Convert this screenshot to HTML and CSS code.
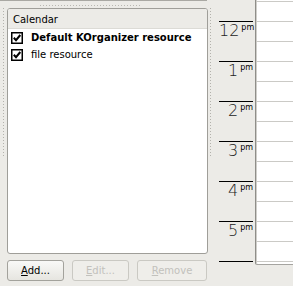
FILE: index.html
```html
<!DOCTYPE html>
<html lang="en">
<head>
    <meta charset="UTF-8">
    <title>Calendar resources</title>
    <link rel="stylesheet" href="styles.css">
</head>
<body>
    <div class="window">
        <div class="side">
            <div class="top-frame">
                <div class="hgrip"></div>
            </div>
            <div class="side-row">
                <div class="vgrip vgrip-left"></div>
                <div class="side-main">
                    <div class="cal-list">
                        <div class="cal-head">Calendar</div>
                        <div class="cal-item active">
                            <svg class="check" width="12" height="12" viewBox="0 0 12 12"><rect x="0.75" y="0.75" width="10.5" height="10.5" fill="#fff" stroke="#000" stroke-width="1.5"/><path d="M2.8 5.8 L5 8.2 L9.3 3" fill="none" stroke="#000" stroke-width="2"/></svg>
                            Default KOrganizer resource
                        </div>
                        <div class="cal-item">
                            <svg class="check" width="12" height="12" viewBox="0 0 12 12"><rect x="0.75" y="0.75" width="10.5" height="10.5" fill="#fff" stroke="#000" stroke-width="1.5"/><path d="M2.8 5.8 L5 8.2 L9.3 3" fill="none" stroke="#000" stroke-width="2"/></svg>
                            file resource
                        </div>
                    </div>
                    <div class="buttons">
                        <button class="btn btn-add"><u>A</u>dd...</button>
                        <button class="btn btn-edit" disabled><u>E</u>dit...</button>
                        <button class="btn btn-remove" disabled><u>R</u>emove</button>
                    </div>
                </div>
                <div class="vgrip vgrip-right"></div>
            </div>
        </div>
        <div class="timebar">
            <div class="hour"><span class="num">12</span><span class="ampm">pm</span></div>
            <div class="hour"><span class="num">1</span><span class="ampm">pm</span></div>
            <div class="hour"><span class="num">2</span><span class="ampm">pm</span></div>
            <div class="hour"><span class="num">3</span><span class="ampm">pm</span></div>
            <div class="hour"><span class="num">4</span><span class="ampm">pm</span></div>
            <div class="hour"><span class="num">5</span><span class="ampm">pm</span></div>
            <div class="hour"></div>
        </div>
        <div class="agenda">
            <div class="slot"></div><div class="slot"></div><div class="slot"></div>
            <div class="slot"></div><div class="slot"></div><div class="slot"></div>
            <div class="slot"></div><div class="slot"></div><div class="slot"></div>
            <div class="slot"></div><div class="slot"></div><div class="slot"></div>
            <div class="slot"></div><div class="slot"></div>
        </div>
    </div>
</body>
</html>
```

FILE: styles.css
```css
body {
    margin: 0;
    padding: 0;
    background: #ecebe7;
    font-family: 'DejaVu Sans', sans-serif;
    font-size: 10px;
    color: #000;
}
.window {
    display: flex;
    align-items: flex-start;
    width: 293px;
    height: 286px;
    overflow: hidden;
}
.side {
    width: 212px;
    flex-shrink: 0;
    display: flex;
    flex-direction: column;
}
.top-frame {
    width: 207px;
    height: 7px;
    border-top: 1px solid #a9a8a3;
    border-bottom-right-radius: 3px;
}
.hgrip {
    margin: 4px 0 0 40px;
    width: 100px;
    height: 1px;
    background: repeating-linear-gradient(to right, #b9b8b2 0 1px, transparent 1px 3px);
}
.side-row {
    display: flex;
}
.vgrip {
    flex-shrink: 0;
}
.vgrip::before {
    content: '';
    display: block;
    width: 1px;
    height: 150px;
    background: repeating-linear-gradient(to bottom, #b3b2ac 0 1px, transparent 1px 3px);
}
.vgrip-left {
    width: 7px;
}
.vgrip-left::before {
    margin-left: 3px;
}
.vgrip-right {
    width: 4px;
}
.vgrip-right::before {
    margin-left: 2px;
}
.side-main {
    width: 201px;
}
.cal-list {
    height: 244px;
    background: #fff;
    border: 1px solid #9f9e99;
    border-radius: 3px;
    overflow: hidden;
}
.cal-head {
    height: 19px;
    line-height: 21px;
    padding-left: 5px;
    background: #ecebe7;
    border-bottom: 1px solid #dcdbd6;
}
.cal-item {
    display: flex;
    align-items: center;
    height: 17px;
    padding-left: 3px;
    white-space: nowrap;
}
.cal-item.active {
    font-weight: bold;
}
.check {
    flex-shrink: 0;
    margin-right: 8px;
}
.buttons {
    display: flex;
    gap: 8px;
    margin-top: 6px;
}
.btn {
    height: 21px;
    padding: 0;
    font-family: 'DejaVu Sans', sans-serif;
    font-size: 10px;
    color: #000;
    background: linear-gradient(#f9f9f7, #e6e5e0);
    border: 1px solid #a3a29c;
    border-radius: 3px;
}
.btn:disabled {
    color: #c2c1bc;
    background: #efeeea;
    border-color: #cac9c3;
}
.btn-add, .btn-edit {
    width: 57px;
}
.btn-remove {
    width: 70px;
}
.timebar {
    width: 43px;
    height: 265px;
    flex-shrink: 0;
    overflow: hidden;
    padding-top: 21px;
    box-sizing: border-box;
}
.hour {
    height: 40px;
    box-sizing: border-box;
    margin: 0 2px 0 7px;
    border-top: 1px solid #000;
    text-align: right;
    white-space: nowrap;
}
.num {
    font-size: 16px;
    font-weight: 200;
    line-height: 18px;
    color: #222;
}
.ampm {
    font-size: 8px;
    vertical-align: top;
    line-height: 12px;
    margin-left: 2px;
}
.agenda {
    flex: 1;
    height: 265px;
    box-sizing: border-box;
    padding-top: 1px;
    background: #fff;
    border-left: 1px solid #8f8e89;
    border-bottom: 1px solid #a5a4a0;
    border-bottom-left-radius: 2px;
    box-shadow: inset 1px 0 #cfceca;
    overflow: hidden;
}
.slot {
    height: 20px;
    box-sizing: border-box;
    border-top: 1px solid #cbcac6;
}
```
